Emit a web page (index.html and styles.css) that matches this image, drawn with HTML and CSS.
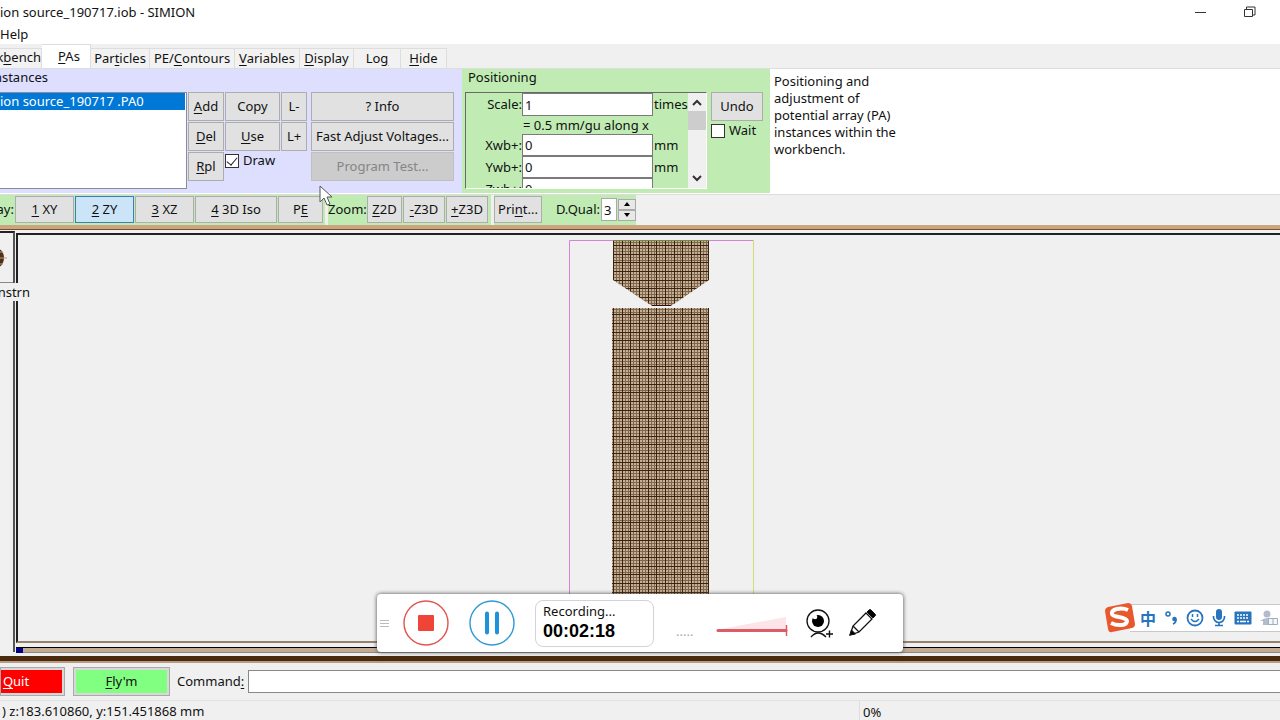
FILE: index.html
```html
<!DOCTYPE html>
<html lang="en">
<head>
<meta charset="utf-8">
<title>ion source_190717.iob - SIMION</title>
<link rel="stylesheet" href="styles.css">
</head>
<body>
<div class="app">
  <header class="titlebar">
    <span>ion source_190717.iob - SIMION</span>
    <div class="window-buttons">
      <button class="window-button" aria-label="Minimize"><svg width="12" height="12"><path d="M0 6.5H11" stroke="#333" fill="none"/></svg></button>
      <button class="window-button" aria-label="Restore"><svg width="12" height="12"><path d="M.5 3.5h8v7h-8zM2.500 3V1h8.500v8H9" stroke="#333" fill="none"/></svg></button>
    </div>
  </header>
  <nav class="menubar"><button class="menu-item">Help</button></nav>
  <nav class="tabs">
    <button class="tab tab-work">k<u>b</u>ench</button>
    <button class="tab tab-pas selected"><u>P</u>As</button>
    <button class="tab tab-particles">Par<u>t</u>icles</button>
    <button class="tab tab-contours">PE/<u>C</u>ontours</button>
    <button class="tab tab-variables"><u>V</u>ariables</button>
    <button class="tab tab-display"><u>D</u>isplay</button>
    <button class="tab tab-log">Lo<u>g</u></button>
    <button class="tab tab-hide"><u>H</u>ide</button>
  </nav>
  <section class="panels">
    <div class="instances">
      <h2 class="heading heading-cut">nstances</h2>
      <div class="instances-body">
        <ul class="list"><li class="list-item">ion source_190717 .PA0</li></ul>
        <div class="stack col-add">
          <button class="btn"><u>A</u>dd</button>
          <button class="btn"><u>D</u>el</button>
          <button class="btn"><u>R</u>pl</button>
        </div>
        <div class="stack col-copy">
          <button class="btn">Copy</button>
          <button class="btn"><u>U</u>se</button>
          <label class="check"><input type="checkbox" checked>Draw</label>
        </div>
        <div class="stack col-layer">
          <button class="btn">L-</button>
          <button class="btn">L+</button>
        </div>
        <div class="stack col-info">
          <button class="btn">? Info</button>
          <button class="btn">Fast Adjust Voltages...</button>
          <button class="btn" disabled>Program Test...</button>
        </div>
      </div>
    </div>
    <div class="positioning">
      <h2 class="heading">Positioning</h2>
      <div class="positioning-body">
        <div class="scrollbox">
          <div class="fields">
            <label for="scale">Scale:</label><input id="scale" type="text" value="1"><span>times</span>
            <span class="note">= 0.5 mm/gu along x</span>
            <label for="xwb">Xwb+:</label><input id="xwb" type="text" value="0"><span>mm</span>
            <label for="ywb">Ywb+:</label><input id="ywb" type="text" value="0"><span>mm</span>
            <label for="zwb">Zwb+:</label><input id="zwb" type="text" value="0"><span></span>
          </div>
          <div class="scrollbar">
            <svg width="19" height="18"><path d="M5 12l4-4 4 4" stroke="#333" stroke-width="2" fill="none"/></svg>
            <div class="thumb"></div>
            <svg width="19" height="18"><path d="M5 6l4 4 4-4" stroke="#333" stroke-width="2" fill="none"/></svg>
          </div>
        </div>
        <div class="stack col-undo">
          <button class="btn">Undo</button>
          <label class="check"><input type="checkbox">Wait</label>
        </div>
      </div>
    </div>
    <p class="hint">Positioning and adjustment of potential array (PA) instances within the workbench.</p>
  </section>
  <section class="toolbar">
    <div class="tools views">
      <span class="view-label">ay:</span>
      <button class="btn view"><u>1</u> XY</button>
      <button class="btn view active"><u>2</u> ZY</button>
      <button class="btn view"><u>3</u> XZ</button>
      <button class="btn view-iso"><u>4</u> 3D Iso</button>
      <button class="btn view-pe">P<u>E</u></button>
    </div>
    <div class="tools zooms">
      <span class="zoom-label">Zoom:</span>
      <button class="btn zoom-2d"><u>Z</u>2D</button>
      <button class="btn zoom-3d"><u>-</u>Z3D</button>
      <button class="btn zoom-3d"><u>+</u>Z3D</button>
    </div>
    <div class="tools quality">
      <button class="btn print">Pri<u>n</u>t...</button>
      <label class="quality-label" for="qual">D.Qual:</label>
      <input id="qual" class="quality-input" type="text" value="3">
      <div class="spinner">
        <button aria-label="Increase"><svg width="8" height="4"><path d="M1 4l3-4 3 4z"/></svg></button>
        <button aria-label="Decrease"><svg width="8" height="4"><path d="M1 0l3 4 3-4z"/></svg></button>
      </div>
    </div>
  </section>
  <main class="workspace">
    <aside class="thumbs">
      <div class="thumb-view"><svg width="10" height="24"><ellipse cx="-2" cy="12" rx="6" ry="9" fill="#4c321b"/><path d="M0 12h7M0 6h3M0 18h3" stroke="#c99d73" fill="none"/></svg></div>
      <span class="thumb-label">nstrn</span>
    </aside>
    <div class="view-area">
      <svg class="canvas" width="100%" height="100%">
        <defs>
          <pattern id="mesh" width="26" height="26" patternUnits="userSpaceOnUse" x="613" y="2">
            <rect width="26" height="26" fill="#c4b195"/>
            <path d="M2.500 0v26M5.500 0v26M11.500 0v26M14.500 0v26M20.500 0v26M23.500 0v26M0 2.500h26M0 5.500h26M0 11.500h26M0 14.500h26M0 20.500h26M0 23.500h26" stroke="#80664c"/>
            <path d="M8.500 0v26M17.500 0v26M25.500 0v26M0 8.500h26M0 17.500h26M0 25.500h26" stroke="#3b2110"/>
          </pattern>
        </defs>
        <path d="M551.500 420V5.500H735" stroke="#d583d8" fill="none"/>
        <path d="M735.500 5V420" stroke="#d3dc72" fill="none"/>
        <path d="M595 5h96v40l-38 26h-19l-39-26z" fill="url(#mesh)"/>
        <path d="M595 5.500h96" stroke="#6f8b3c"/>
        <path d="M634 70.500h19" stroke="#350b05"/>
        <rect x="594" y="73" width="97" height="340" fill="url(#mesh)"/>
      </svg>
      <div class="hscroll"><div class="hscroll-thumb"></div></div>
    </div>
  </main>
  <section class="command-row">
    <button class="run quit"><u>Q</u>uit</button>
    <button class="run fly"><u>F</u>ly'm</button>
    <label for="command">Command<u>:</u></label>
    <input id="command" type="text">
  </section>
  <footer class="status"><span class="coords">) z:183.610860, y:151.451868 mm</span><span class="percent">0%</span></footer>

  <svg class="cursor" width="14" height="22" viewBox="0 0 14 22"><path d="M1 1v16l4-4 3 7 3-1-3-7h5z" fill="#fff" stroke="#555"/></svg>

  <div class="recorder">
    <svg class="grip" width="9" height="9"><path d="M0 1.500h9M0 4.500h9M0 7.500h9" stroke="#bbb"/></svg>
    <button class="round" aria-label="Stop"><svg width="46" height="46"><circle cx="23" cy="23" r="22" fill="none" stroke="#e0554f" stroke-width="1.400"/><rect x="15" y="15" width="16" height="16" rx="1" fill="#f04438"/></svg></button>
    <button class="round" aria-label="Pause"><svg width="46" height="46"><circle cx="23" cy="23" r="22" fill="none" stroke="#2f9ad6" stroke-width="1.400"/><path d="M18 13.500v19M28 13.500v19" stroke="#1f93da" stroke-width="4" stroke-linecap="round"/></svg></button>
    <div class="timer"><span>Recording...</span><strong>00:02:18</strong></div>
    <span class="dots">.....</span>
    <svg class="volume" width="72" height="24"><path d="M5 16L70 4v13z" fill="#fbe5e8"/><path d="M2 17.500h68" stroke="#dd5b66" stroke-width="3" stroke-linecap="round"/><path d="M70.500 12v11" stroke="#dd5b66" stroke-width="1.500"/></svg>
    <button class="webcam" aria-label="Webcam"><svg width="28" height="30"><circle cx="12" cy="13" r="11" fill="#fff" stroke="#111" stroke-width="1.300"/><circle cx="12" cy="13" r="6" fill="#000"/><circle cx="9" cy="9" r="2.300" fill="#fff"/><path d="M5 29q7-8 15 0M20 26h7M23.500 22.500v7" stroke="#111" stroke-width="1.400" fill="none"/></svg></button>
    <button class="pencil" aria-label="Draw"><svg width="28" height="28"><path d="M2 26l3-9L18 4l6 6-13 13zM5 17l6 6" fill="#fff" stroke="#111" stroke-width="1.300"/><path d="M2 26l1.500-5 4 4zM19 3l2-2q1-1 2 0l4 4q1 1 0 2l-2 2z" fill="#000" stroke="#111"/></svg></button>
  </div>

  <div class="ime">
    <svg class="ime-logo" width="32" height="32" viewBox="0 0 32 32"><path d="M4 5L24 1q3 0 4 3l3 18q0 3-3 4L8 30q-3 1-4-3L1 9q0-3 3-4z" fill="#e9582c"/><path d="M24 8C17 5 7 7 8 12c1 4 14 2 15 7 0 5-10 5-16 2" fill="none" stroke="#fff" stroke-width="4"/></svg>
    <div class="ime-bar">
      <span class="ime-lang">中</span>
      <svg width="14" height="18"><circle cx="4" cy="5" r="2" fill="none" stroke="#2874bd" stroke-width="1.500"/><circle cx="10.500" cy="10" r="2.300" fill="#2874bd"/><path d="M12 10q0 4-3 5" stroke="#2874bd" stroke-width="1.800" fill="none"/></svg>
      <svg width="18" height="18"><circle cx="9" cy="9" r="7.500" fill="none" stroke="#2874bd" stroke-width="1.800"/><path d="M6.500 5v3M11.500 5v3M5 10q4 5 8 0" stroke="#2874bd" stroke-width="1.500" fill="none"/></svg>
      <svg width="14" height="18"><rect x="4" y="0" width="6" height="11" rx="3" fill="#2874bd"/><path d="M1.500 7v1a5.500 5.500 0 0 0 11 0V7M7 13v3M3 16.500h8" stroke="#2874bd" stroke-width="1.700" fill="none"/></svg>
      <svg width="18" height="14"><rect x=".5" y=".5" width="17" height="13" rx="1" fill="#2874bd"/><path d="M3 4h12M3 7h12" stroke="#fff" stroke-width="1.500" stroke-dasharray="2 1"/><path d="M3 10.500h2M6 10.500h6M13 10.500h2" stroke="#fff" stroke-width="1.500"/></svg>
      <svg width="20" height="18"><circle cx="7" cy="5" r="3.500" fill="#b2bccb"/><path d="M0 12q6-5 12-2v6H3v-4z" fill="#b2bccb"/><path d="M8.500 9.500h9v6h-9zM13 9.500v6" stroke="#a0adbe" fill="#f4f6f8"/></svg>
    </div>
  </div>
</div>
</body>
</html>
```
FILE: styles.css
```css
* { box-sizing: border-box; }
body { margin: 0; }
body, button, input { font-family: "Noto Sans", "Open Sans", "Noto Sans CJK SC", sans-serif; font-size: 13px; line-height: 17px; color: #111; }
button { padding: 0; border: 0; background: none; white-space: nowrap; }
input { margin: 0; }
u { text-underline-offset: 2px; }
svg { display: block; flex: none; }
.app { position: relative; display: flex; flex-direction: column; height: 100vh; overflow: hidden; background: #f0f0f0; }

.titlebar { display: flex; justify-content: space-between; height: 24px; align-items: center; background: #fff; }
.window-buttons { display: flex; gap: 37px; padding-right: 24px; }
.menubar { height: 20px; background: #fff; }
.menu-item { display: block; height: 20px; }

.tabs { display: flex; align-items: flex-end; height: 25px; padding-top: 1px; border-bottom: 1px solid #ddd; }
.tab { height: 20px; padding-bottom: 1px; border: 1px solid #ddd; border-width: 1px 1px 0 0; background: #f2f2f2; }
.tab.selected { height: 24px; background: #fff; padding-left: 6px; }
.tab-work { display: flex; justify-content: flex-end; width: 42px; overflow: hidden; }
.tab-pas { width: 49px; }
.tab-particles { width: 59px; }
.tab-contours { width: 85px; }
.tab-variables { width: 65px; }
.tab-display { width: 54px; }
.tab-log { width: 47px; }
.tab-hide { width: 46px; }

.panels { display: flex; height: 126px; background: #fff; border-bottom: 1px solid #ddd; }
.heading { margin: 0; height: 23px; font-size: 13px; line-height: 17px; font-weight: 400; }
.instances { width: 462px; height: 124px; background: #dedeff; }
.instances-body, .positioning-body { display: flex; gap: 1px; }
.heading-cut { display: flex; justify-content: flex-end; width: 48px; overflow: hidden; }
.list { width: 187px; height: 97px; margin: 0; padding: 0 1px 0 0; list-style: none; background: #fff; border: 1px solid #8c8c98; border-left: 0; }
.list-item { height: 17px; background: #0078d7; color: #fff; }
.stack { display: flex; flex-direction: column; gap: 1px; }
.btn { height: 29px; background: #e1e1e1; border: 1px solid #adadad; }
.btn:disabled { background: #ccc; border-color: #c0c0c0; color: #858585; }
.col-add { width: 36px; }
.col-copy { width: 55px; }
.col-layer { width: 26px; }
.col-info { width: 143px; margin-left: 3px; }
.check { display: flex; align-items: center; gap: 4px; height: 17px; }
.check input { appearance: none; display: grid; place-items: start center; width: 14px; height: 14px; flex: none; background: #fff; border: 1px solid #333; }
.check input:checked::after { content: ""; width: 5px; height: 9px; border: solid #222; border-width: 0 1px 1px 0; transform: rotate(40deg); }

.positioning { width: 308px; height: 124px; background: #c0ecb4; padding-left: 3px; }
.positioning .heading { padding-left: 3px; }
.positioning-body { gap: 4px; }
.scrollbox { display: flex; width: 242px; height: 97px; overflow: hidden; border: 1px solid #696969; border-color: #696969 #fff #fff #696969; }
.fields { display: grid; grid-template-columns: 56px 131px 1fr; grid-template-rows: 23px 18px 22px 22px 22px; align-items: center; flex: 1; height: 95px; overflow: hidden; }
.fields label { text-align: right; }
.fields input { width: 100%; height: 100%; padding: 0 2px; background: #fff; border: 1px solid #7a7a7a; }
.fields span { padding-left: 1px; }
.fields .note { grid-column: 2 / 4; }
.scrollbar { display: flex; flex-direction: column; width: 18px; background: #f0f0f0; }
.thumb { height: 19px; width: 18px; margin-bottom: auto; background: #cdcdcd; }
.col-undo { width: 52px; }

.hint { width: 134px; margin: 0; padding: 4px 0 0 4px; }

.toolbar { display: flex; gap: 3px; height: 30px; }
.tools { display: flex; align-items: center; gap: 1px; padding-bottom: 1px; background: #c0ecb4; }
.tools .btn { height: 27px; }
.views { width: 325px; }
.views .active { background: #cce4f7; border-color: #3c7fb1; }
.view-label { display: flex; justify-content: flex-end; width: 14px; overflow: hidden; }
.view { width: 59px; }
.view-iso { width: 82px; }
.view-pe { width: 45px; }
.zooms { width: 163px; }
.zoom-label { width: 38px; }
.zoom-2d { width: 35px; }
.zoom-3d { width: 42px; }
.quality { width: 142px; }
.print { width: 48px; }
.quality-label { flex: 1; text-align: right; }
.quality-input { width: 16px; height: 23px; padding: 0 2px; background: #fff; border: 1px solid #aaa; }
.spinner { display: grid; width: 18px; height: 22px; }
.spinner button { display: grid; place-items: center; background: #e8e8e8; border: 1px solid #aaa; }

.workspace { flex: 1; display: flex; gap: 1px; min-height: 0; padding-top: 2px; border-top: 4px solid #c9a67f; border-bottom: 5px solid #4a2a0c; box-shadow: inset 0 1px #7a5030; }
.thumbs { width: 15px; height: 421px; border-top: 2px solid #222; border-right: 2px solid #555; }
.thumb-view { display: flex; align-items: center; height: 50px; border-bottom: 1px solid #888; }
.thumb-label { position: relative; display: flex; justify-content: flex-end; width: 30px; padding-top: 1px; background: #f0f0f0; }
.view-area { flex: 1; min-width: 0; display: flex; flex-direction: column; gap: 4px; padding: 2px 0 3px; }
.canvas { flex: 1; min-height: 0; border: 2px solid #222; border-width: 2px 0 2px 2px; border-bottom-color: #94826f; }
.hscroll { height: 6px; flex: none; background: #c4aa91; border-top: 1px solid #000; border-bottom: 1px solid #888; }
.hscroll-thumb { width: 7px; height: 5px; background: #00008b; }

.command-row { display: flex; align-items: center; height: 39px; border-top: 2px solid #b89b82; }
.run { height: 29px; border: 3px solid #d8d8d8; outline: 1px solid #aaa; outline-offset: -1px; }
.quit { width: 65px; background: #f00; color: #fff; padding-right: 30px; border-left: 0; }
.fly { width: 97px; margin: 0 7px 0 8px; background: #80ff80; }
.command-row label { width: 71px; }
.command-row input { flex: 1; min-width: 0; height: 23px; background: #fff; border: 1px solid #888; border-right: 0; }

.status { display: flex; height: 20px; border-top: 1px solid #e2e2e2; }
.coords { width: 860px; padding: 2px 0 0 2px; border-right: 1px solid #ddd; }
.percent { padding: 3px 0 0 3px; }

.cursor { position: absolute; left: 319px; top: 185px; }

.recorder { position: absolute; left: 50%; bottom: 68px; transform: translateX(-50%); display: flex; align-items: center; width: 526px; height: 58px; padding-left: 3px; background: #fff; border-radius: 4px; box-shadow: 0 0 4px #444; }
.grip { margin-right: 14px; }
.round { margin-right: 20px; }
.timer { display: flex; flex-direction: column; width: 119px; height: 47px; padding: 2px 7px; border: 1px solid #d2d2dc; border-radius: 8px; }
.timer strong { font: bold 18px/22px "Liberation Sans", sans-serif; color: #000; }
.dots { margin: 16px 23px 0 22px; color: #aaa; }
.volume { margin: 4px 18px 0 0; }
.webcam { margin-right: 14px; }

.ime { position: absolute; right: 0; bottom: 86px; display: flex; align-items: center; }
.ime-logo { z-index: 1; margin-right: -6px; }
.ime-bar { display: flex; align-items: center; gap: 8px; height: 28px; padding-left: 10px; background: #fff; border: solid #c8c8cc; border-width: 1px 0; }
.ime-lang { font: bold 16px/24px "Noto Sans CJK SC", sans-serif; color: #2874bd; }
```
